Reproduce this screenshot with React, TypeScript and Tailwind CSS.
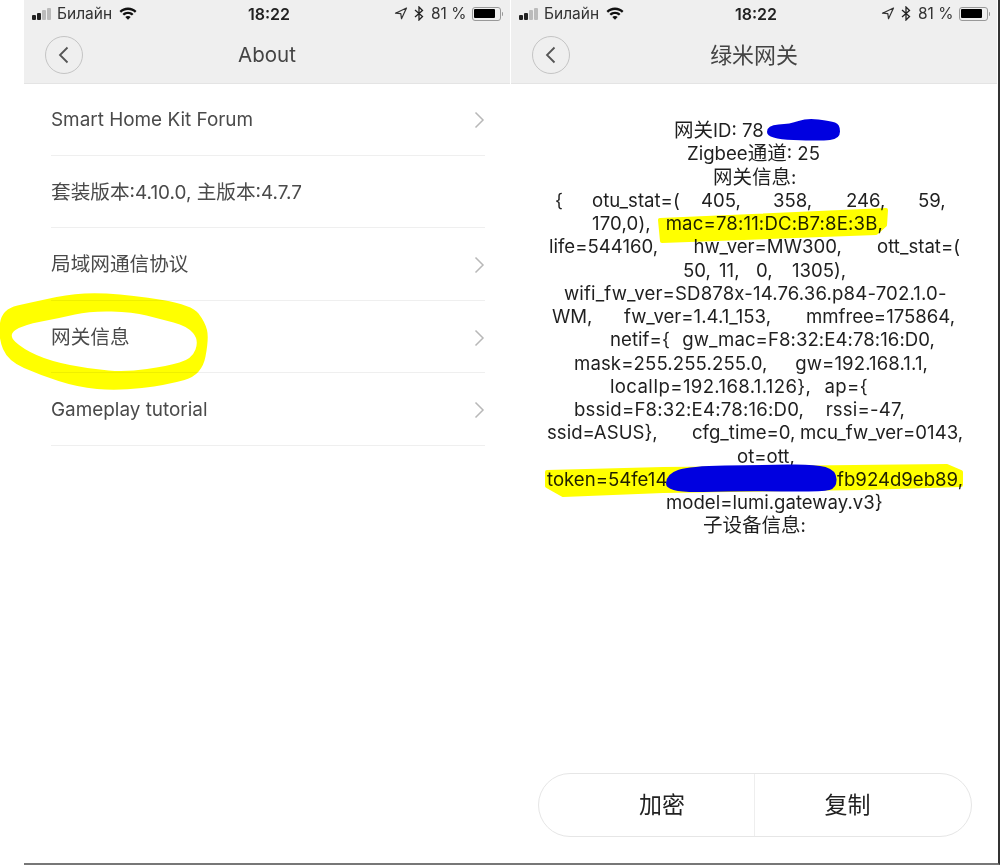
const font = "font-['Inter','Noto_Sans_CJK_SC',sans-serif]";

// CJK glyphs in the reference run a little bigger than the latin ones
function Mixed({ text, cjk = "text-[1.05em]" }: { text: string; cjk?: string }) {
  const parts = text.split(/([\u4e00-\u9fff]+)/);
  return (
    <>
      {parts.map((p, i) =>
        i % 2 === 1 ? (
          <span key={i} className={cjk}>
            {p}
          </span>
        ) : (
          <span key={i}>{p}</span>
        ),
      )}
    </>
  );
}

// closed curve through the given points, midpoints joined with quadratics
function smooth(points: number[][]) {
  const mid = (a: number[], b: number[]) => [(a[0] + b[0]) / 2, (a[1] + b[1]) / 2];
  const n = points.length;
  const start = mid(points[n - 1], points[0]);
  let d = `M${start[0]} ${start[1]}`;
  points.forEach((p, i) => {
    const m = mid(p, points[(i + 1) % n]);
    d += `Q${p[0]} ${p[1]} ${m[0]} ${m[1]}`;
  });
  return d + "Z";
}

function StatusBar() {
  return (
    <div className="relative flex h-[27px] items-center pl-[8px] pr-[7px] text-[15.500px] text-[#333]">
      <div className="flex items-center">
        <div className="flex items-end gap-[1px]">
          <span className="h-[5px] w-[4px] rounded-[1px] bg-[#222]" />
          <span className="h-[7px] w-[4px] rounded-[1px] bg-[#222]" />
          <span className="h-[10px] w-[4px] rounded-[1px] bg-[#bbb]" />
          <span className="h-[12px] w-[4px] rounded-[1px] bg-[#bbb]" />
        </div>
        <span className="ml-[6px]">Билайн</span>
        <svg width="18" height="13" viewBox="0 0 18 13" className="ml-[7px]" fill="#111">
          <path d="M9 0.500C5.600 0.500 2.700 1.800 0.500 4l1.600 1.700C3.900 3.900 6.300 2.900 9 2.900s5.100 1 6.900 2.800L17.500 4C15.300 1.800 12.400 0.500 9 0.500z" />
          <path d="M9 4.700c-2.200 0-4.100 0.800-5.500 2.200l1.600 1.700C6.100 7.600 7.500 7 9 7s2.900 0.600 3.900 1.600l1.600-1.700C13.100 5.500 11.200 4.700 9 4.700z" />
          <path d="M9 8.900c-1.100 0-2 0.400-2.700 1.100L9 12.800l2.700-2.800C11 9.300 10.100 8.900 9 8.900z" />
        </svg>
      </div>
      <div className="absolute left-1/2 ml-[2px] -translate-x-1/2 text-[16px] font-semibold text-[#222]">18:22</div>
      <div className="ml-auto flex items-center">
        <svg width="14" height="13" viewBox="0 0 14 13" fill="none" stroke="#333" strokeWidth="1.200" strokeLinejoin="round">
          <path d="M12.500 1L1.500 6.200l5.300 0.400 0.700 5.100z" />
        </svg>
        <svg width="10" height="15" viewBox="0 0 10 15" fill="none" stroke="#222" strokeWidth="1.300" className="ml-[6px]">
          <path d="M1 4l7.500 6.500L5 14V1l3.500 3.500L1 11" />
        </svg>
        <span className="ml-[7px]">81 %</span>
        <div className="ml-[5px] flex items-center">
          <div className="h-[14px] w-[29px] rounded-[3px] border border-[#999] p-[1.500px]">
            <div className="h-full w-[88%] rounded-[1px] bg-black" />
          </div>
          <div className="ml-[1px] h-[4px] w-[1.500px] rounded-r-[1px] bg-[#999]" />
        </div>
      </div>
    </div>
  );
}

function Header({ title }: { title: string }) {
  return (
    <div className="h-[84px] border-b border-[#e4e4e4] bg-[#efefef]">
      <StatusBar />
      <div className="relative flex h-[56px] items-center justify-center">
        <button className="absolute left-[21px] top-[9px] flex h-[38px] w-[38px] items-center justify-center rounded-full border border-[#c4c4c4]">
          <svg width="12" height="18" viewBox="0 0 12 18" fill="none" stroke="#555" strokeWidth="1.800">
            <path d="M9.500 1.500L2 9l7.500 7.500" />
          </svg>
        </button>
        <span className="text-[20.500px] text-[#444]">
          <Mixed text={title} cjk="text-[1.07em]" />
        </span>
      </div>
    </div>
  );
}

const rows = [
  { label: "Smart Home Kit Forum", arrow: true },
  { label: "套装版本:4.10.0, 主版本:4.7.7", arrow: false },
  { label: "局域网通信协议", arrow: true },
  { label: "网关信息", arrow: true },
  { label: "Gameplay tutorial", arrow: true },
];

function AboutPanel() {
  return (
    <div className="relative w-[486px] shrink-0">
      <Header title="About" />
      <div className="-mt-[1px] pl-[27px] pr-[25px]">
        {rows.map((r) => (
          <div key={r.label} className="flex h-[72.600px] items-center justify-between border-b border-[#efefef] pt-[2px] text-[18.900px] leading-[24px] text-[#4a4a4a]">
            <span>
              <Mixed text={r.label} cjk="text-[1.04em]" />
            </span>
            {r.arrow && (
              <svg width="11" height="18" viewBox="0 0 11 18" fill="none" stroke="#b8b8b8" strokeWidth="1.500">
                <path d="M1.500 1.500L9 9l-7.500 7.500" />
              </svg>
            )}
          </div>
        ))}
      </div>
    </div>
  );
}

// each line keeps the odd spacing of the reference: words spread between its two insets,
// or set at fixed steps (widths) where the gaps are uneven
const lines: { cls: string; words: string[]; widths?: string[] }[] = [
  { cls: "pl-[163px]", words: ["网关ID: 78"] },
  { cls: "pl-[176px]", words: ["Zigbee通道: 25"] },
  { cls: "pl-[202px]", words: ["网关信息:"] },
  {
    cls: "pl-[44px]",
    words: ["{", "otu_stat=(", "405,", "358,", "246,", "59,"],
    widths: ["w-[37px]", "w-[109px]", "w-[72px]", "w-[73px]", "w-[72px]", ""],
  },
  { cls: "pl-[81px] pr-[114px] tracking-[0.150px]", words: ["170,0),", "mac=78:11:DC:B7:8E:3B,"] },
  { cls: "pl-[38px] pr-[37px]", words: ["life=544160,", "hw_ver=MW300,", "ott_stat=("] },
  { cls: "pl-[172px]", words: ["50,", "11,", "0,", "1305),"], widths: ["w-[36px]", "w-[37px]", "w-[36px]", ""] },
  { cls: "pl-[53px] tracking-[0.150px]", words: ["wifi_fw_ver=SD878x-14.76.36.p84-702.1.0-"] },
  { cls: "pl-[41px]", words: ["WM,", "fw_ver=1.4.1_153,", "mmfree=175864,"], widths: ["w-[72px]", "w-[182px]", ""] },
  { cls: "pl-[99px] pr-[62px] tracking-[0.050px]", words: ["netif={", "gw_mac=F8:32:E4:78:16:D0,"] },
  { cls: "pl-[63px] pr-[69px] tracking-[0.100px]", words: ["mask=255.255.255.0,", "gw=192.168.1.1,"] },
  { cls: "pl-[99px] pr-[129px] tracking-[0.350px]", words: ["localIp=192.168.1.126},", "ap={"] },
  { cls: "pl-[63px] pr-[92px] tracking-[0.200px]", words: ["bssid=F8:32:E4:78:16:D0,", "rssi=-47,"] },
  { cls: "pl-[36px]", words: ["ssid=ASUS},", "cfg_time=0,", "mcu_fw_ver=0143,"], widths: ["w-[145px]", "w-[108px]", ""] },
  { cls: "pl-[226px]", words: ["ot=ott,"] },
  { cls: "pl-[36px] pr-[34px]", words: ["token=54fe14", "fb924d9eb89,"] },
  { cls: "pl-[155px]", words: ["model=lumi.gateway.v3}"] },
  { cls: "pl-[192px]", words: ["子设备信息:"] },
];

function GatewayPanel() {
  return (
    <div className="relative flex w-[486px] shrink-0 flex-col">
      <Header title="绿米网关" />
      <div className="pt-[35px] text-[18.600px] leading-[23.250px] text-[#1f1f1f]">
        {lines.map((l, i) => (
          <div key={i} className={`flex whitespace-pre ${l.widths ? "" : "justify-between"} ${l.cls}`}>
            {l.words.map((w, j) => (
              <span key={j} className={l.widths ? l.widths[j] : ""}>
                <Mixed text={w} />
              </span>
            ))}
          </div>
        ))}
      </div>
      <div className="mb-[26px] ml-[27px] mt-auto flex h-[64px] w-[434px] items-center rounded-full border border-[#e6e6e6] text-[23px] text-[#222]">
        <div className="flex h-full w-[216px] items-center justify-center border-r border-[#eee] pl-[31px]">加密</div>
        <div className="flex h-full flex-1 items-center justify-center pr-[31px]">复制</div>
      </div>
    </div>
  );
}

const ring = {
  outer: [[2, 309], [33, 302], [80, 292], [133, 295], [192, 305], [205, 322], [209, 338], [202, 375], [167, 385], [117, 391], [77, 387], [40, 375], [8, 361], [-2, 337]],
  inner: [[8, 335], [23, 325], [60, 318], [90, 311], [133, 312], [160, 319], [187, 326], [199, 340], [192, 359], [167, 366], [127, 372], [90, 369], [50, 361], [23, 349]],
};

const idBlot = [[767, 139], [767, 125], [790, 124], [807, 118], [830, 121], [840, 124], [840, 139], [820, 141]];
const tokenBlot = [[666, 493], [666, 474], [690, 466], [760, 465], [815, 464], [836, 470], [837, 488], [822, 492], [740, 491]];

export default function App() {
  return (
    <div className={`relative h-[865px] w-[1000px] overflow-hidden bg-white pl-[24px] ${font}`}>
      <div className="flex h-full border-b-2 border-r-2 border-b-[#777] border-r-[#333]">
        <AboutPanel />
        <div className="w-[1px] shrink-0 bg-white" />
        <GatewayPanel />
      </div>
      {/* marker scribbles drawn over the screenshots */}
      <svg width="1000" height="865" viewBox="0 0 1000 865" className="pointer-events-none absolute left-0 top-0 mix-blend-multiply">
        <path d={smooth(ring.outer) + smooth(ring.inner)} fill="#ffff00" fillRule="evenodd" />
        <path d="M660 220L886 210L885 225L876 233L662 241Z" fill="#ffff00" stroke="#ffff00" strokeWidth="4" strokeLinejoin="round" />
        <path d="M547 472L663 469L947 466L961 472L961 485L863 488L663 491L563 495L547 486Z" fill="#ffff00" stroke="#ffff00" strokeWidth="4" strokeLinejoin="round" />
      </svg>
      <svg width="1000" height="865" viewBox="0 0 1000 865" className="pointer-events-none absolute left-0 top-0" fill="#0000e0">
        <path d={smooth(idBlot)} />
        <path d={smooth(tokenBlot)} />
      </svg>
    </div>
  );
}
